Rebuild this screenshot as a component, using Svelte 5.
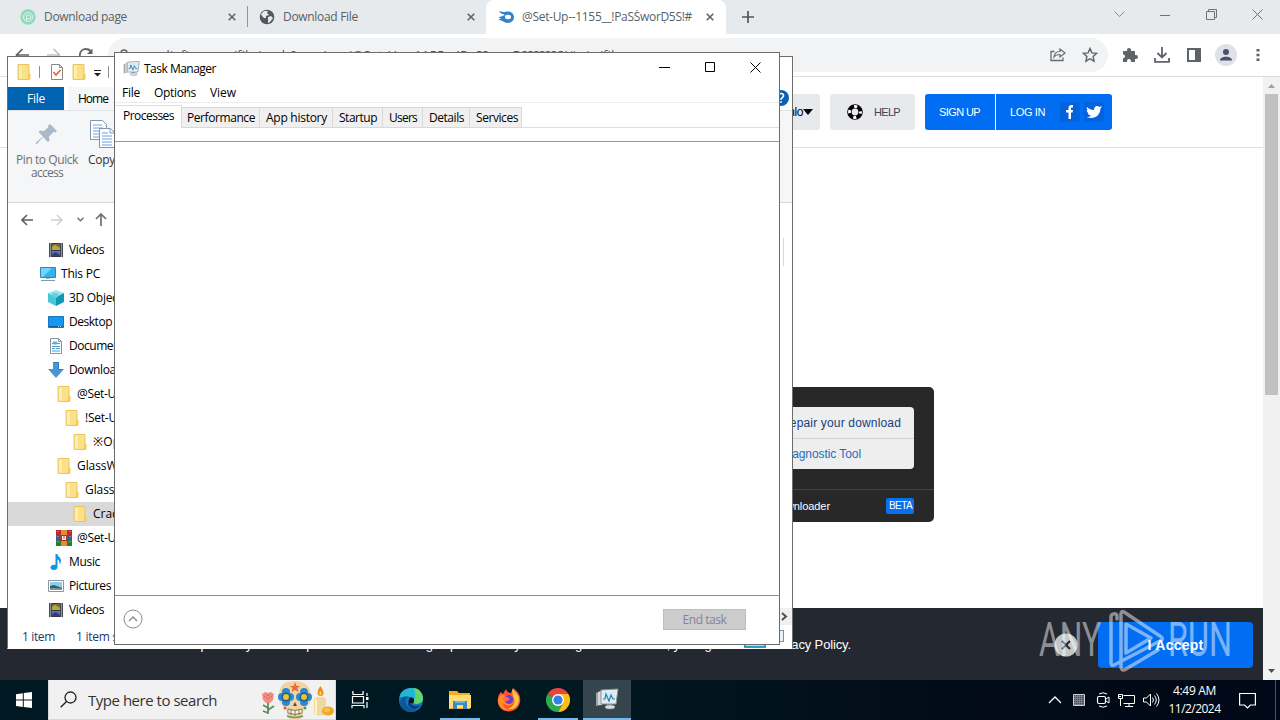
<script>
  // Adjusts tracking so that a label takes the given width in pixels.
  function fit(node, width) {
    const range = document.createRange();
    range.selectNodeContents(node);
    const natural = range.getBoundingClientRect().width;
    const count = [...node.textContent].length;
    node.style.letterSpacing = `${(width - natural) / count}px`;
  }

  const tree = [
    { icon: 'video', pad: 40, text: 'Videos', w: 35 },
    { icon: 'pc', pad: 32, text: 'This PC', w: 39 },
    { icon: 'cube', pad: 40, text: '3D Objects', w: 58 },
    { icon: 'desktop', pad: 40, text: 'Desktop', w: 43 },
    { icon: 'doc', pad: 40, text: 'Documents', w: 60 },
    { icon: 'down', pad: 40, text: 'Downloads', w: 59 },
    { icon: 'folder', pad: 48, text: '@Set-Up', w: 46 },
    { icon: 'folder', pad: 56, text: '!Set-Up', w: 39 },
    { icon: 'folder', pad: 64, text: '※Open', w: 42 },
    { icon: 'folder', pad: 48, text: 'GlassWire', w: 55 },
    { icon: 'folder', pad: 56, text: 'GlassWire', w: 55 },
    { icon: 'folder', pad: 64, text: 'Crack', w: 31, selected: true },
    { icon: 'rar', pad: 48, text: '@Set-Up', w: 46 },
    { icon: 'music', pad: 40, text: 'Music', w: 31 },
    { icon: 'picture', pad: 40, text: 'Pictures', w: 42 },
    { icon: 'video', pad: 40, text: 'Videos', w: 35 }
  ];

  const tmTabs = [
    { text: 'Performance', box: 78, w: 68 },
    { text: 'App history', box: 73, w: 61 },
    { text: 'Startup', box: 50, w: 38 },
    { text: 'Users', box: 40, w: 28 },
    { text: 'Details', box: 47, w: 35 },
    { text: 'Services', box: 52, w: 42 }
  ];
</script>

{#snippet icon(name)}
  <svg class="ic" width="16" height="16" viewBox="0 0 16 16">
    {#if name === 'folder'}
      <path d="M2 .5h11v15H2z" fill="#fbe08a" stroke="#e8c660" /><path d="M12 10.500l2.500-1v6H12z" fill="#f3cb5c" /><path d="M3 1.500h3v13H3z" fill="#ffedae" />
    {:else if name === 'video'}
      <path d="M1 1h14v14H1z" fill="#343a44" /><path d="M4 2h8v6H4z" fill="#756d37" /><path d="M4 5l3-2 5 3v2H4z" fill="#b4a93c" /><path d="M4 9h8v5H4z" fill="#6373c3" /><path d="M4 12l4-2 4 3v1H4z" fill="#353f77" />
      <path d="M2.500 1.500v13M13.500 1.500v13" stroke="#e4e7eb" stroke-width="1.400" stroke-dasharray="1 1" />
    {:else if name === 'pc'}
      <path d="M.5 1.500h15v10H.5z" fill="#35b2ee" stroke="#3585b5" /><path d="M1 2h11L3 11H1z" fill="#70d5fa" /><path d="M1 14.500h14" stroke="#8297a6" /><path d="M6 12h4v1H6z" fill="#a8b6bf" />
    {:else if name === 'cube'}
      <path d="M8 0l8 3-8 4-8-4z" fill="#9be8ee" /><path d="M0 3l8 4v9l-8-4z" fill="#47c7d8" /><path d="M16 3L8 7v9l8-4z" fill="#1596b2" /><path d="M4 3h6v4L8 8 4 6z" fill="#64d2df" />
    {:else if name === 'desktop'}
      <path d="M.5 2.500h15v11H.5z" fill="#1596f2" stroke="#1475bd" /><path d="M1 12.500h14" stroke="#075a9b" /><path d="M10 12.500h4" stroke="#b3ddfc" stroke-dasharray="1 1" />
    {:else if name === 'doc'}
      <path d="M2.500.5h8l3 3v12h-11z" fill="#fff" stroke="#8b9298" /><path d="M10.500.5v3h3" fill="none" stroke="#8b9298" /><path d="M4 5.500h4M9 5.500h3M4 8.500h8M4 10.500h3M8 10.500h4M4 13h8" stroke="#4f9bc7" /><path d="M5 3.500h4v3H5z" fill="#66add1" />
    {:else if name === 'down'}
      <path d="M5 0h6v7h5l-8 9-8-9h5z" fill="#4a94d8" /><path d="M5.500.5h5v7h4" fill="none" stroke="#3178b9" />
    {:else if name === 'rar'}
      <path d="M0 0h16v5H0z" fill="#b8282e" /><path d="M0 5h16v5H0z" fill="#3359a9" /><path d="M0 10h16v6H0z" fill="#267c3c" /><path d="M5 0h6v16H5z" fill="#e08c31" /><path d="M4 5h8v6H4z" fill="#a93727" /><path d="M6.500 6v3.500h3V6M8 6v3" stroke="#fff" fill="none" /><path d="M2 1v14M14 1v14" stroke="#eac35b" stroke-dasharray="1 4" />
    {:else if name === 'music'}
      <path d="M7.500 0h2c0 3 3.500 3 3.500 6.500 0 2-.8 3-1.500 4 .4-3-.6-4.500-2-5V13c0 2-1.500 3-3.500 3C4 16 2.500 15 2.500 13.500 2.500 11.500 5 10.500 7.500 11z" fill="#1495e4" />
    {:else if name === 'picture'}
      <path d="M.5 2.500h15v11H.5z" fill="#fff" stroke="#8b969e" /><path d="M2 4h12v8H2z" fill="#92caea" /><path d="M2 8l4-1 8 3v2H2z" fill="#315b78" /><path d="M2 10.500c4-1 8 0 12 0V12H2z" fill="#7c9d8e" />
    {/if}
  </svg>
{/snippet}

{#snippet cross()}
  <svg class="ic" width="8" height="8" viewBox="0 0 8 8"><path d="M.7.7l6.600 6.600M7.300.7L.7 7.300" stroke="#5f6368" stroke-width="1.600" /></svg>
{/snippet}

{#snippet monitor(size)}
  <svg class="ic" width={size} height={size} viewBox="0 0 24 24">
    <path d="M1 6l5-2v14l-5 1z" fill="#9ea5a8" /><path d="M3 5l4-1v14H3z" fill="#d5d8da" /><path d="M6 3l17-1-2 15H6z" fill="#e9edef" stroke="#8a9295" /><path d="M8 5l13-1-1.500 11H8z" fill="#d5edf8" />
    <path d="M8 12h2l1-5 3 7 2-6 2 4h2" fill="none" stroke="#317ba7" stroke-width="1.200" /><path d="M12 17h5v2h-5z" fill="#8b9294" /><ellipse cx="15" cy="20" rx="5" ry="2" fill="#d7dcde" stroke="#879194" stroke-width=".6" />
  </svg>
{/snippet}

<div class="screen">
  <main class="browser">
    <div class="tabstrip">
      <div class="tab first">
        <svg class="ic" width="16" height="16" viewBox="0 0 16 16"><circle cx="8" cy="8" r="7.700" fill="#8fd9bd" /><circle cx="8" cy="8" r="4.500" fill="none" stroke="#d5f2e6" stroke-width="1.200" /><path d="M6.500 12V6h2a2 2 0 010 4h-2" fill="none" stroke="#d5f2e6" stroke-width="1.200" /></svg>
        <span class="name" use:fit={83}>Download page</span>{@render cross()}
      </div>
      <div class="tab second">
        <svg class="ic" width="16" height="16" viewBox="0 0 16 16"><circle cx="8" cy="8" r="7.300" fill="#54595f" /><path d="M2 5l3-3 4 0-1 2 2 2-3 1 0 2-2 0-2-2zM9 8l3-1 2 2-3 4-2 1 0-3z" fill="#e7eaed" /></svg>
        <span class="name" use:fit={75}>Download File</span>{@render cross()}
      </div>
      <div class="tab active">
        <svg class="ic" width="16" height="12" viewBox="0 0 16 12"><path d="M.5.5C4 .4 6 1.500 7.500.8 12-.7 16 2 16 6s-3 6-6.500 6C6 12 5 9 0 9c2-.5 3-1.500 3-1.500L0 6.500c4-1 5-2 7-2.500C5 3 3 2.500.5.5z" fill="#3483ca" /><ellipse cx="10" cy="6" rx="3" ry="2.200" fill="#fff" /></svg>
        <span class="name" use:fit={170}>@Set-Up--1155__!PaSṠworḌ5S!#</span>{@render cross()}
      </div>
      <svg class="ic plus" width="12" height="12" viewBox="0 0 12 12"><path d="M6 0v12M0 6h12" stroke="#51565c" stroke-width="1.700" /></svg>
      <div class="wincontrols">
        <svg class="ic" width="11" height="7" viewBox="0 0 11 7"><path d="M.5.5l5 5 5-5" fill="none" stroke="#878c91" /></svg>
        <svg class="ic" width="10" height="10" viewBox="0 0 10 10"><path d="M0 5.500h10" stroke="#6e7377" /></svg>
        <svg class="ic" width="11" height="11" viewBox="0 0 11 11"><path d="M.5 2.500h8v8h-8zM2.500 2V.5h8v8H9" fill="none" stroke="#6e7377" /></svg>
        <svg class="ic" width="11" height="11" viewBox="0 0 11 11"><path d="M.5.5l10 10M10.500.5l-10 10" stroke="#6e7377" /></svg>
      </div>
    </div>

    <div class="toolbar">
      <div class="navs">
        <svg class="ic" width="14" height="14" viewBox="0 0 14 14"><path d="M14 7H2M7.500 1L1.500 7l6 6" fill="none" stroke="#5f6368" stroke-width="1.700" /></svg>
        <svg class="ic" width="14" height="14" viewBox="0 0 14 14"><path d="M0 7h12M6.500 1l6 6-6 6" fill="none" stroke="#bdc1c6" stroke-width="1.700" /></svg>
        <svg class="ic" width="14" height="14" viewBox="0 0 14 14"><path d="M12.500 9A6 6 0 117 1c2.500 0 4 1 5 3" fill="none" stroke="#5f6368" stroke-width="1.800" /><path d="M13.500.5V6H8z" fill="#5f6368" /></svg>
      </div>
      <div class="address">
        <svg class="ic" width="12" height="14" viewBox="0 0 12 14"><path d="M3 6V4a3 3 0 016 0v2" fill="none" stroke="#5f6368" stroke-width="1.500" /><path d="M1 6h10v8H1z" fill="#5f6368" /></svg>
        <span class="url" use:fit={480}>mediafire.com/file/yvgb9amsirgx/@Set-Up--1155__!PaS?worD??????S!#.zip/file</span>
        <svg class="ic" width="16" height="16" viewBox="0 0 16 16"><path d="M4.500 4.500H1v9h12v-3" fill="none" stroke="#686d72" stroke-width="1.300" /><path d="M4 10c.5-4 3-5.500 6-5.500V2l5 4-5 4V7.500C7 7.500 5.500 8 4 10z" fill="none" stroke="#686d72" stroke-width="1.200" /></svg>
        <svg class="ic" width="16" height="16" viewBox="0 0 16 16"><path d="M8 1.500l1.900 4.400 4.800.4-3.600 3.200 1 4.700L8 11.700l-4.100 2.500 1-4.700L1.300 6.300l4.800-.4z" fill="none" stroke="#5f6368" stroke-width="1.400" /></svg>
      </div>
      <div class="actions">
        <svg class="ic" width="16" height="16" viewBox="0 0 16 16"><path d="M1 4h4V3a2 2 0 014 0v1h4v4h1a2 2 0 010 4h-1v3H9v-1a2 2 0 00-4 0v1H1v-4h1a2 2 0 000-3.500H1z" fill="#5f6368" /></svg>
        <svg class="ic" width="16" height="16" viewBox="0 0 16 16"><path d="M8 0v10M3.500 6L8 10.500 12.500 6M1 11v3.800h14V11" fill="none" stroke="#5f6368" stroke-width="1.800" /></svg>
        <svg class="ic" width="16" height="16" viewBox="0 0 16 16"><path d="M1 1h14v14H1zM3 3v10h6V3z" fill="#5f6368" fill-rule="evenodd" /></svg>
        <svg class="ic avatar" width="22" height="22" viewBox="0 0 22 22"><circle cx="11" cy="11" r="11" fill="#dfe1e8" /><circle cx="11" cy="8" r="3" fill="#4b4f70" /><path d="M5 16.500c0-5 12-5 12 0z" fill="#4b4f70" /></svg>
        <svg class="ic dots" width="4" height="14" viewBox="0 0 4 14"><path d="M.5 1h3v2.500h-3zM.5 5.800h3v2.500h-3zM.5 10.500h3V13h-3z" fill="#5f6368" /></svg>
      </div>
    </div>

    <div class="viewport">
      <div class="page">
        <header>
          <div class="hbtn select"><span>Downlo</span><svg class="ic" width="10" height="6" viewBox="0 0 10 6"><path d="M0 0h10L5 6z" /></svg></div>
          <div class="hbtn help">
            <svg class="ic" width="16" height="16" viewBox="0 0 16 16"><circle cx="8" cy="8" r="5.600" fill="none" stroke="#000" stroke-width="4.400" /><circle cx="8" cy="8" r="5.500" fill="none" stroke="#fff" stroke-width="2.800" stroke-dasharray="3.200 5.440" stroke-dashoffset="1.600" /></svg>
            <span use:fit={26}>HELP</span>
          </div>
          <div class="auth">
            <div class="signup"><span use:fit={41}>SIGN UP</span></div>
            <div class="login">
              <span use:fit={35}>LOG IN</span>
              <svg class="ic" width="20" height="20" viewBox="0 0 20 20"><rect width="20" height="20" rx="3" fill="#0462dc" /><path d="M8.500 17v-6.500H6V8h2.500V6c0-2.500 1.500-3 4.500-3v2.500c-1.600 0-2 .1-2 1V8h2l-.4 2.500H11V17z" fill="#fff" /></svg>
              <svg class="ic" width="20" height="20" viewBox="0 0 20 20"><rect width="20" height="20" rx="3" fill="#0462dc" /><path d="M3 5c2 2 4 3 7 3 0-4 3-5 5.500-3L18 4l-1.500 2.500C16 14 10 18 2.500 15c2 0 3.500-.4 4.500-1.500-2 0-3-1-3.300-2.200H5C3.500 10.500 2.700 9.500 2.700 8L4 8.300C2.800 7 2.500 6.500 3 5z" fill="#fff" /></svg>
            </div>
          </div>
        </header>
        <section class="content">
          <div class="card">
            <div class="links">
              <div class="blink dark"><span use:fit={120}>Repair your download</span></div>
              <div class="blink"><span use:fit={80}>Diagnostic Tool</span></div>
            </div>
            <div class="cardfoot"><span use:fit={58}>Downloader</span><b use:fit={23}>BETA</b></div>
          </div>
        </section>
        <footer class="cookies">
          <p use:fit={825}>Mediafire.com uses cookies to provide you with a personalized browsing experience. By continuing to use this site, you agree to our Privacy Policy.</p>
          <svg class="ic" width="24" height="24" viewBox="0 0 24 24"><circle cx="12" cy="12" r="11.500" fill="#c5c6c8" /><path d="M8 8l8 8M16 8l-8 8" stroke="#24272e" stroke-width="2" /></svg>
          <div class="accept"><span use:fit={56}>I Accept</span></div>
        </footer>
      </div>
      <div class="scroll">
        <svg class="ic" width="17" height="17" viewBox="0 0 17 17"><path d="M5 11h7L8.500 7z" fill="#a0a0a0" /></svg>
        <div class="thumb"></div>
        <svg class="ic" width="17" height="17" viewBox="0 0 17 17"><path d="M5 6h7l-3.500 4z" fill="#505050" /></svg>
      </div>
    </div>
  </main>

  <section class="window explorer">
    <div class="ex-title">
      {@render icon('folder')}<i class="bar"></i>
      <svg class="ic" width="16" height="16" viewBox="0 0 16 16"><path d="M2.500.5h8l3 3v12h-11z" fill="#fff" stroke="#898989" /><path d="M10.500.5v3h3" fill="none" stroke="#898989" /><path d="M4.500 8l2.500 3 4.500-5" stroke="#df653e" fill="none" stroke-width="1.700" /></svg>
      {@render icon('folder')}
      <svg class="ic caret" width="7" height="7" viewBox="0 0 7 7"><path d="M0 .5h7" stroke="#222" /><path d="M0 3h7L3.500 6.500z" fill="#222" /></svg><i class="bar"></i>
    </div>
    <div class="ex-tabs">
      <div class="file"><span use:fit={18}>File</span></div><div class="home"><span use:fit={30}>Home</span></div>
      <svg class="ic qmark" width="16" height="16" viewBox="0 0 16 16"><circle cx="8" cy="8" r="8" fill="#0b61b0" /><path d="M5.500 6c0-3.500 5-3 5-.3 0 1.800-2.500 2-2.500 4M8 11.300v1.500" stroke="#fff" stroke-width="1.700" fill="none" /></svg>
    </div>
    <div class="ribbon">
      <div class="pin">
        <svg class="ic" width="24" height="24" viewBox="0 0 24 24"><path d="M15 1l7 7-1.500 1.500-2-.5-4.500 4.500.5 4-1.500 1.500-5-5-6 7H1v-1.500l7-6L3.500 9 5 7.500l4 .5L13.500 4l-.5-1.500z" fill="#aab8ca" /></svg>
        <span use:fit={62}>Pin to Quick</span><span use:fit={32}>access</span>
      </div>
      <div class="copy">
        <svg class="ic" width="26" height="28" viewBox="0 0 26 28"><path d="M.5.5h12l4 4v15H.5z" fill="#fff" stroke="#8295ab" /><path d="M3 5h9M3 8h10M3 11h10M3 14h10M3 17h10" stroke="#72a2dd" /><path d="M9.500 8.500h11l4 4v15h-15z" fill="#fff" stroke="#8295ab" /><path d="M20 9v4h4M12 13h6M12 16h10M12 19h10M12 22h10M12 25h10" stroke="#6a9ee3" fill="none" /></svg>
        <span use:fit={27}>Copy</span>
      </div>
    </div>
    <div class="ex-nav">
      <svg class="ic" width="12" height="12" viewBox="0 0 12 12"><path d="M12 6H1M6 1L1 6l5 5" fill="none" stroke="#606060" stroke-width="1.600" /></svg>
      <svg class="ic fw" width="12" height="12" viewBox="0 0 12 12"><path d="M0 6h11M6 1l5 5-5 5" fill="none" stroke="#cfcfcf" stroke-width="1.400" /></svg>
      <svg class="ic dd" width="7" height="5" viewBox="0 0 7 5"><path d="M.5.7l3 3 3-3" fill="none" stroke="#707070" stroke-width="1.500" /></svg>
      <svg class="ic up" width="12" height="13" viewBox="0 0 12 13"><path d="M6 13V1M1 6l5-5 5 5" fill="none" stroke="#707070" stroke-width="1.700" /></svg>
    </div>
    <div class="ex-body">
      <div class="tree">
        {#each tree as row}
          <div class="row" class:selected={row.selected} style="padding-left: {row.pad}px">
            {@render icon(row.icon)}<span use:fit={row.w}>{row.text}</span>
          </div>
        {/each}
      </div>
      <div class="pane"><i class="edge"></i>
        <svg class="ic hscroll" width="17" height="17" viewBox="0 0 17 17"><path d="M0 0h17v17H0z" fill="#f0f0f0" /><path d="M7 5l4 3.500L7 12" fill="none" stroke="#505050" stroke-width="2" /></svg>
      </div>
    </div>
    <div class="status">
      <span use:fit={33}>1 item</span><span use:fit={81}>1 item selected</span>
      <i class="detail"></i><i class="large"></i>
    </div>
  </section>

  <section class="window taskman">
    <div class="tm-title">
      {@render monitor(17)}<span use:fit={72}>Task Manager</span>
      <div class="controls">
        <svg class="ic" width="11" height="11" viewBox="0 0 11 11"><path d="M0 5.500h11" stroke="#000" /></svg>
        <svg class="ic" width="11" height="11" viewBox="0 0 11 11"><path d="M.5.5h9v9h-9z" fill="none" stroke="#000" /></svg>
        <svg class="ic" width="11" height="11" viewBox="0 0 11 11"><path d="M.5.5l10 10M10.500.5l-10 10" stroke="#000" /></svg>
      </div>
    </div>
    <div class="menu"><span use:fit={18}>File</span><span use:fit={42}>Options</span><span use:fit={26}>View</span></div>
    <div class="tm-tabs">
      <div class="current"><span use:fit={51}>Processes</span></div>
      {#each tmTabs as t}
        <div class="tmtab" style="width: {t.box}px"><span use:fit={t.w}>{t.text}</span></div>
      {/each}
      <div class="rest"></div>
    </div>
    <div class="colhead"></div>
    <div class="list"></div>
    <div class="tm-foot">
      <svg class="ic" width="20" height="20" viewBox="0 0 20 20"><circle cx="10" cy="10" r="9" fill="none" stroke="#8c8c8c" /><path d="M6 12l4-4 4 4" fill="none" stroke="#8c8c8c" stroke-width="1.400" /></svg>
      <div class="endtask"><span use:fit={44}>End task</span></div>
    </div>
  </section>

  <svg class="watermark" width="210" height="66" viewBox="0 0 210 66">
    <path d="M78 12V9c0-3-6-3-6 1v45c0 3 1 4 3 3l46-24c3-1 3-3 0-5L85 5c-2-1-3 0-3 2v52c0 4 2 5 5 3l32-19M87 17l25 14-25 15z" fill="none" stroke="#fff" stroke-width="3.500" stroke-linejoin="round" stroke-linecap="round" />
    <g fill="#fff"><text x="0" y="49" textLength="62" lengthAdjust="spacingAndGlyphs">ANY</text><text x="129" y="49" textLength="64" lengthAdjust="spacingAndGlyphs">RUN</text></g>
  </svg>

  <footer class="taskbar">
    <div class="start"><svg class="ic" width="16" height="16" viewBox="0 0 16 16"><path d="M0 2.200L6.800 1.200v6.400H0zM7.800 1L16 0v7.600H7.800zM0 8.500h6.800v6.400L0 14zM7.800 8.500H16V16l-8.200-1.100z" fill="#fff" /></svg></div>
    <div class="search">
      <svg class="ic" width="17" height="17" viewBox="0 0 17 17"><circle cx="10.500" cy="6.500" r="5.500" fill="none" stroke="#222" stroke-width="1.300" /><path d="M6.500 10.500L.7 16.300" stroke="#222" stroke-width="1.400" /></svg>
      <span use:fit={129}>Type here to search</span>
      <svg class="ic art" width="76" height="40" viewBox="0 0 76 40">
        <path d="M9 20v14M9 28l-5-3M9 30l6-4M9 33l-5-2" stroke="#5d8b5a" stroke-width="1.800" /><path d="M3 14l3-2 3 1 3-1 3 2-1 6-3 3H7l-3-3z" fill="#ee9180" /><path d="M5 16l4 3 4-3M7 14l2 2 2-2" fill="none" stroke="#d86f63" />
        <path d="M20 16C20 4 27 1 36 1s16 4 16 16c0 7-3 9-7 11l-2 10q-7 3-14 0l-2-10c-4-2-7-5-7-12z" fill="#f2d4a4" />
        <g fill="#2a89d1"><circle cx="27" cy="12" r="4" /><circle cx="23" cy="17" r="4" /><circle cx="27" cy="22" r="4" /><circle cx="31" cy="17" r="4" /><circle cx="45" cy="12" r="4" /><circle cx="41" cy="17" r="4" /><circle cx="45" cy="22" r="4" /><circle cx="49" cy="17" r="4" /></g>
        <circle cx="27" cy="17" r="4.500" fill="#195d94" /><circle cx="45" cy="17" r="4.500" fill="#195d94" /><circle cx="27" cy="17" r="3" fill="#f5bf30" /><circle cx="45" cy="17" r="3" fill="#f5bf30" />
        <path d="M36 2l1.500 4h4l-3 2 1 4-3.500-2-3.500 2 1-4-3-2h4z" fill="#e56e40" /><path d="M34 26l2-4 2 4z" fill="#5c463a" /><path d="M29 29q7 3 14 0v4q-7 3-14 0z" fill="#fff4dc" stroke="#84795c" /><path d="M32 30v5M36 31v5M40 30v5" stroke="#84795c" /><path d="M28 36q8 3 16 0" stroke="#6b9b66" stroke-width="1.500" fill="none" /><circle cx="26" cy="28" r="1.500" fill="#d65d48" /><circle cx="46" cy="28" r="1.500" fill="#4d9d61" />
        <path d="M55 18q6-2 12 0v16q-6 3-12 0z" fill="#f0d79c" /><path d="M57 19v15" stroke="#fff2cd" stroke-width="2" /><path d="M61.500 6c4 6 4 10 0 10s-4-5 0-10z" fill="#f18a22" /><path d="M61.500 11c2 3 1 4 0 4s-2-1 0-4z" fill="#ffd75c" /><ellipse cx="69" cy="31" rx="6" ry="4.500" fill="#f3a526" /><ellipse cx="68" cy="30" rx="3" ry="2" fill="#f9c350" />
      </svg>
    </div>
    <div class="app"><svg class="ic" width="18" height="18" viewBox="0 0 18 18"><path d="M1 .8h1v2.700h10V.8h1M1 17.200v-2.700h12v2.700M1.500 5.500h11v6.500h-11zM16 2v3M16 11v6" fill="none" stroke="#fff" stroke-width="1.200" /><path d="M15 6h2.500v3H15z" fill="#fff" /></svg></div>
    <div class="app wide"><svg class="ic" width="24" height="24" viewBox="0 0 24 24"><circle cx="12" cy="12" r="12" fill="#1676bd" /><path d="M.5 9.500C1 4 6 0 12 0c7 0 12 5 12 10.500 0 5-7 7-10 4 2-3-1-6-5-6-4 0-7 1-8.500 1z" fill="#20b6d7" /><path d="M14 0c6 0 10 5 10 10.500 0 5-7 7-10 4C17 10 17 4 14 0z" fill="#65d46b" /><path d="M7 11c-2 6 4 12 12 10-5 4-14 4-17-3-3-6 2-11 7-9z" fill="#0c5799" /><path d="M11 11c-2 5 4 9 11 6-3 4-8 5-11 2-3-2-2-6 0-8z" fill="#0b3a6c" /><ellipse cx="12.500" cy="12.500" rx="2.600" ry="3" fill="#07172c" /></svg></div>
    <div class="app wide open"><svg class="ic" width="22" height="20" viewBox="0 0 22 20"><path d="M0 1h8l2 2h11v16H0z" fill="#f9a924" /><path d="M0 5h22v13H0z" fill="#ffdc74" /><path d="M4 19v-8h14v8h-4v-4H8v4z" fill="#348ccb" /><path d="M6 11h10v2H6z" fill="#66b6e8" /></svg></div>
    <div class="app wide"><svg class="ic" width="24" height="24" viewBox="0 0 24 24"><path d="M4 4l2 2 3-5c1 3 3 4 5 4L16 0c6 4 8 9 7 14-1 6-6 9.500-11 9.500C5 23.500 0 18 .8 11 1 8 2 6 4 4z" fill="#ff5136" /><path d="M15 1c7 5 8 10 6 15-2 4-6 6-10 5 7-3 8-9 5-12z" fill="#ffc83c" /><path d="M3 8c4-3 5 1 9-1 4 0 6 3 5 6-1 5-8 6-11 2 0 4 3 7 8 7C7 24 1 19 1 12z" fill="#ff8c25" /><circle cx="12" cy="11.500" r="4.500" fill="#7a38c7" /><path d="M5 10l5-1 3 2-3 2c-2 1-3 0-5-3z" fill="#ff7134" /></svg></div>
    <div class="app wide open"><svg class="ic" width="24" height="24" viewBox="0 0 24 24"><path d="M12 12L1.600 6A12 12 0 0122.400 6z" fill="#e8453c" /><path d="M12 12L1.600 6A12 12 0 0012 24l5-9z" fill="#2da94f" /><path d="M12 12l5 3-5 9A12 12 0 0022.400 6H12z" fill="#fdbd16" /><circle cx="12" cy="12" r="6" fill="#fff" /><circle cx="12" cy="12" r="4.600" fill="#357fe5" /></svg></div>
    <div class="app tm">{@render monitor(24)}</div>
    <div class="tray">
      <svg class="ic" width="24" height="16" viewBox="0 0 24 16"><path d="M6 11l6-6 6 6" fill="none" stroke="#fff" stroke-width="1.300" /></svg>
      <svg class="ic" width="24" height="16" viewBox="0 0 24 16"><path d="M6.500 2.500h11v11h-11z" fill="#454c57" stroke="#d0d4d9" /><path d="M8.500 3v10M10.500 3v10M12.500 3v10M14.500 3v10M7 4.500h10M7 6.500h10M7 8.500h10M7 10.500h10M7 12.500h10" fill="none" stroke="#8e949d" stroke-width=".6" /></svg>
      <svg class="ic" width="24" height="16" viewBox="0 0 24 16"><rect x="6.500" y="4.500" width="8" height="7" rx="1.500" fill="none" stroke="#fff" stroke-width="1.200" /><path d="M15 7l3-2v6l-3-2M8 2q4-2.500 8 0M8 14q4 2.500 8 0" fill="none" stroke="#fff" /></svg>
      <svg class="ic" width="24" height="16" viewBox="0 0 24 16"><path d="M8.500 3.500h11v8h-11M14 12v3M10 14.500h8M3.500 2.500h4v4h-4zM5.500 6.500V14M3 4.500h3" fill="none" stroke="#fff" /></svg>
      <svg class="ic" width="24" height="16" viewBox="0 0 24 16"><path d="M4.500 6h3l4-4v12l-4-4h-3zM13.500 5.500q2 2.500 0 5M15.500 3.500q3.500 4.500 0 9M17.500 1.500q5 6.500 0 13" fill="none" stroke="#fff" /></svg>
      <div class="clock"><span use:fit={43}>4:49 AM</span><span use:fit={52}>11/2/2024</span></div>
      <svg class="ic" width="17" height="17" viewBox="0 0 17 17"><path d="M.6 1.500h15.800v11.500h-5L8.500 16 5.600 13h-5z" fill="none" stroke="#fff" stroke-width="1.200" /></svg>
      <i class="peek"></i>
    </div>
  </footer>
</div>

<style>
  :global(body) { margin: 0; overflow: hidden; }
  .screen { position: relative; width: 1280px; height: 720px; display: flex; flex-direction: column; overflow: hidden; background: #fff; color: #000; font: 12px/16px "Open Sans", "Noto Sans", "Noto Sans CJK JP", sans-serif; }
  .screen * { box-sizing: border-box; }
  span { white-space: nowrap; }
  .ic { display: block; flex: none; }

  .browser { height: 680px; display: flex; flex-direction: column; }
  .tabstrip { height: 34px; flex: none; display: flex; align-items: center; background: #e6eaed; color: #5a5f64; }
  .tab { height: 34px; display: flex; align-items: center; font-size: 12px; }
  .name { flex: 1; margin-left: 8px; }
  .first { width: 236px; padding-left: 20px; }
  .second { width: 228px; margin-left: 11px; padding-left: 11px; border-left: 1px solid transparent; border-image: linear-gradient(transparent 20%, #91969b 20%, #91969b 78%, transparent 78%) 1; }
  .active { width: 240px; margin-left: 11px; padding: 0 12px; background: #fff; border-radius: 8px 8px 0 0; }
  .plus { margin-left: 16px; }
  .wincontrols { margin-left: auto; margin-right: 17px; display: flex; align-items: center; gap: 35.5px; padding-bottom: 5px; }
  .toolbar { height: 43px; flex: none; display: flex; align-items: center; border-bottom: 1px solid #d9dbde; padding-bottom: 1px; }
  .navs { width: 108px; padding-left: 15px; display: flex; gap: 18px; }
  .address { width: 1000px; height: 34px; border-radius: 17px; background: #f1f3f4; display: flex; align-items: center; padding: 0 10px; gap: 16px; }
  .url { flex: 1; margin-left: -4px; font-size: 13px; color: #55595e; }
  .address .ic:first-child { margin-top: 2px; }
  .actions { flex: 1; display: flex; align-items: center; gap: 16px; padding-left: 14px; }
  .avatar { margin-left: -3px; }
  .dots { margin-left: 3px; }

  .viewport { flex: 1; display: flex; min-height: 0; }
  .page { width: 1263px; display: flex; flex-direction: column; font-family: "Liberation Sans", Arial, sans-serif; }
  header { height: 71px; flex: none; border-bottom: 1px solid #dcdee1; display: flex; align-items: center; padding-left: 700px; }
  .hbtn { height: 36px; border-radius: 3px; background: #e7e9ec; display: flex; align-items: center; font-size: 11px; }
  .select { width: 120px; justify-content: flex-end; padding-right: 7px; font-size: 12px; letter-spacing: -.4px; }
  .help { width: 85px; margin-left: 10px; padding-left: 17px; gap: 11px; color: #41454b; }
  .auth { display: flex; height: 36px; margin-left: 10px; width: 187px; border-radius: 3px; overflow: hidden; background: #006df2; color: #fff; font-size: 11px; }
  .signup { width: 71px; display: flex; align-items: center; padding-left: 14px; border-right: 1px solid #fff; }
  .login { flex: 1; display: flex; align-items: center; padding-left: 14px; gap: 4px; }
  .login span { margin-right: 11px; }
  .content { flex: 1; padding: 239px 0 0 634px; }
  .card { width: 300px; height: 135px; border-radius: 5px; background: #282828; display: flex; flex-direction: column; padding-top: 20px; }
  .links { margin: 0 20px; height: 62px; border-radius: 4px; background: #eee; flex: none; }
  .blink { height: 30px; padding-left: 127px; display: flex; align-items: center; color: #1c6ec2; }
  .blink.dark { color: #173d82; border-bottom: 1px solid #d2d2d2; height: 32px; }
  .cardfoot { margin-top: 20px; height: 33px; border-top: 1px solid #424242; display: flex; align-items: center; justify-content: space-between; padding: 0 20px 0 138px; color: #fff; font-size: 11px; }
  .cardfoot b { font-weight: 400; font-size: 10px; background: #0870f0; border-radius: 2px; padding: 0 2px 0 3px; width: 28px; }
  .cookies { height: 72px; flex: none; background: #242830; color: #fff; display: flex; align-items: center; padding: 1px 0 0 26px; }
  .cookies p { width: 1028px; margin: 1px 0 0; white-space: nowrap; font-size: 13px; }
  .accept { margin-left: 20px; width: 155px; height: 46px; border-radius: 4px; background: #006df2; display: flex; justify-content: center; align-items: center; font-size: 14px; font-weight: 700; padding-top: 1px; }
  .scroll { width: 17px; background: #f1f1f1; display: flex; flex-direction: column; align-items: center; }
  .thumb { width: 13px; height: 301px; background: #c1c1c1; }
  .scroll .ic:last-child { margin-top: auto; }

  .window { position: absolute; background: #fff; border: 1px solid #6c6c6c; display: flex; flex-direction: column; overflow: hidden; }
  .explorer { left: 7px; top: 56px; width: 786px; height: 593px; border-bottom-color: #fff; }
  .ex-title { height: 30px; display: flex; align-items: center; padding-left: 8px; flex: none; }
  .bar { width: 1px; height: 12px; background: #8f8f8f; }
  .ex-title .bar { margin: 0 9px 0 7px; }
  .ex-title .caret { margin-left: 7px; margin-top: 3px; }
  .ex-title .ic:nth-of-type(3) { margin-left: 6px; }
  .ex-tabs { height: 24px; display: flex; flex: none; border-bottom: 1px solid #e3e4e6; }
  .file { width: 56px; background: #0063b1; color: #fff; display: flex; align-items: center; justify-content: center; }
  .home { width: 80px; margin-left: 4px; background: #f5f6f7; padding: 4px 10px; }
  .qmark { margin-left: auto; margin-right: 3px; margin-top: 3px; }
  .ribbon { height: 92px; flex: none; background: #f5f6f7; border-bottom: 1px solid #d5d6d7; display: flex; line-height: 13px; }
  .pin { width: 78px; padding-top: 12px; display: flex; flex-direction: column; align-items: center; color: #6e6e6e; }
  .pin .ic { margin-bottom: 6px; }
  .copy { padding: 9px 0 0 2px; color: #333; }
  .copy .ic { margin: 0 0 5px 2px; }
  .ex-nav { height: 35px; flex: none; display: flex; align-items: center; padding: 0 0 2px 13px; }
  .fw { margin-left: 18px; }
  .dd { margin-left: 14px; }
  .up { margin-left: 11px; }
  .ex-body { height: 388px; display: flex; flex: none; }
  .tree { width: 260px; }
  .row { height: 24px; display: flex; align-items: center; gap: 5px; }
  .selected { background: #d9d9d9; }
  .pane { flex: 1; display: flex; flex-direction: column; justify-content: space-between; align-items: flex-end; padding-bottom: 1px; }
  .edge { width: 1px; height: 28px; background: #d9d9d9; margin-right: 8px; }
  .status { flex: 1; display: flex; align-items: center; padding-left: 14px; color: #243a65; gap: 21px; }
  .detail { width: 22px; height: 22px; margin-left: auto; border: 2px solid #299fca; background: #a9e1f5; }
  .large { width: 10px; height: 12px; margin: 0 8px 2px -13px; border: 1px solid #7f8fa9; background: #eaf0f7; }

  .taskman { left: 114px; top: 52px; width: 666px; height: 593px; }
  .tm-title { height: 30px; flex: none; display: flex; align-items: center; padding-left: 8px; gap: 4px; }
  .tm-title span { padding-top: 1px; }
  .controls { margin-left: auto; margin-right: 18px; padding-bottom: 2px; display: flex; gap: 34.5px; }
  .menu { height: 20px; flex: none; display: flex; gap: 14px; align-items: center; padding-left: 7px; border-bottom: 1px solid #ececec; }
  .tm-tabs { height: 25px; flex: none; display: flex; align-items: flex-end; }
  .current { width: 67px; height: 23px; padding: 2px 8px; border-right: 1px solid #d9d9d9; border-top: 1px solid #dedede; }
  .tmtab { height: 21px; flex: none; display: flex; align-items: center; justify-content: center; background: #f0f0f0; border: 1px solid #d9d9d9; border-left: 0; padding-left: 1px; }
  .tmtab:nth-child(7) { padding-left: 3px; }
  .rest { flex: 1; border-bottom: 1px solid #dedede; }
  .colhead { height: 14px; flex: none; border-bottom: 1px solid #999; }
  .list { height: 454px; flex: none; border-bottom: 1px solid #8f8f8f; }
  .tm-foot { flex: 1; display: flex; align-items: center; justify-content: space-between; padding: 0 33px 1px 8px; }
  .tm-foot > .ic { margin-bottom: 1px; }
  .endtask { width: 83px; height: 21px; background: #ccc; border: 1px solid #bebebe; color: #858399; display: flex; align-items: center; justify-content: center; }

  .watermark { position: absolute; left: 1039px; top: 607px; opacity: .48; }
  .watermark text { font: 49px Roboto, sans-serif; }

  .taskbar { height: 40px; background: linear-gradient(90deg, #001821, #011821 45%, #020b18 75%, #010817); display: flex; color: #fff; }
  .start { width: 48px; display: grid; place-items: center; }
  .search { width: 288px; display: flex; align-items: center; height: 40px; background: #f1f1f1; border: 1px solid #d8d8d8; border-top: 0; color: #333; padding-left: 11px; font-size: 15px; }
  .search span { margin-left: 11px; }
  .art { margin-left: auto; }
  .app { width: 48px; height: 40px; display: grid; place-items: center; }
  .wide { width: 49px; padding-left: 4px; }
  .open { background: linear-gradient(#76b9ed, #76b9ed) 7px 100% / 40px 2px no-repeat; }
  .tm { margin-left: 3px; background: #35454e; border-bottom: 2px solid #76b9ed; }
  .tray { margin-left: auto; display: flex; align-items: center; }
  .clock { width: 64px; display: flex; flex-direction: column; align-items: center; line-height: 18px; padding-right: 1px; }
  .tray > .ic:nth-of-type(6) { margin-left: 12px; }
  .peek { width: 1px; height: 40px; background: #4d5561; margin: 0 4px 0 19px; }
</style>
